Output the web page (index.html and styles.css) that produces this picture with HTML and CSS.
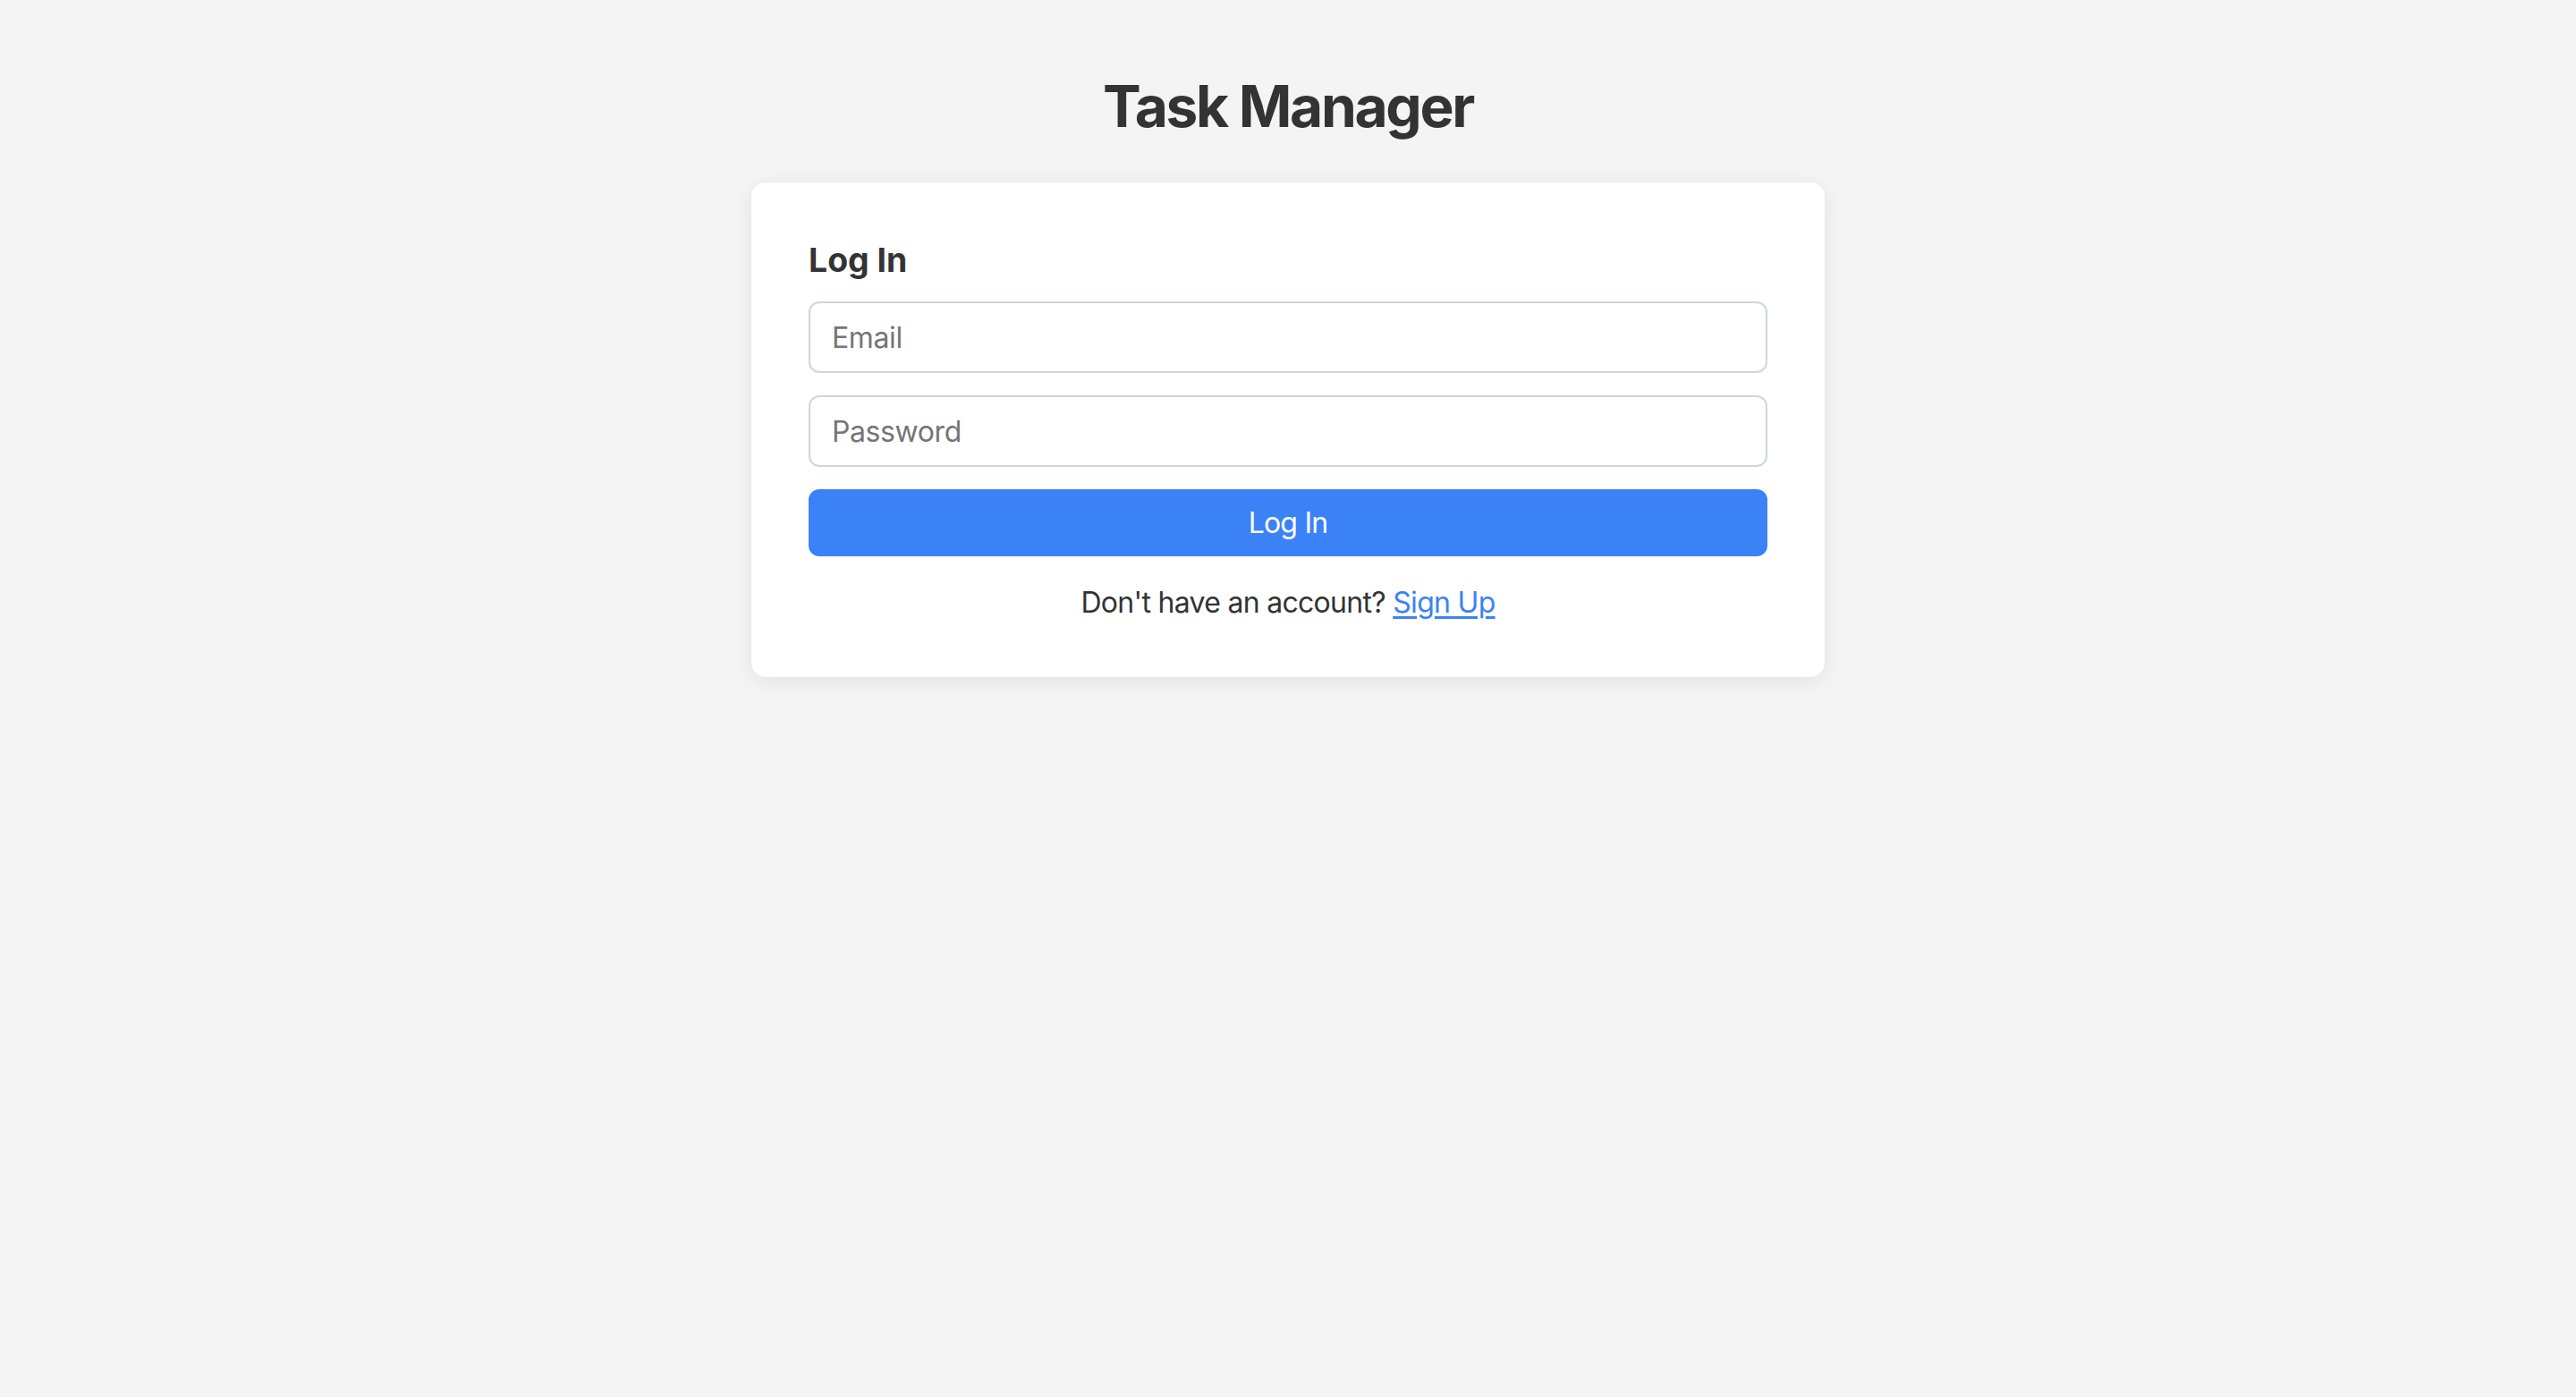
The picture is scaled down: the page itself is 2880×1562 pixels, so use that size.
FILE: index.html
```html
<!DOCTYPE html>
<html lang="en">
<head>
<meta charset="utf-8">
<title>Task Manager</title>
<link rel="stylesheet" href="styles.css">
</head>
<body>
<main class="page">
  <h1 class="title">Task Manager</h1>
  <section class="card">
    <h3 class="card-title">Log In</h3>
    <form class="form">
      <input class="field" type="email" placeholder="Email">
      <input class="field" type="password" placeholder="Password">
      <button class="btn" type="button">Log In</button>
    </form>
    <p class="switch">Don't have an account? <a class="link" href="#">Sign Up</a></p>
  </section>
</main>
</body>
</html>
```

FILE: styles.css
```css
html, body {
  margin: 0;
  padding: 0;
  background: #f4f4f4;
}
body {
  font-family: Inter, "Noto Sans", "Liberation Sans", sans-serif;
  color: #333333;
  min-height: 1562px;
}
.page {
  display: flex;
  flex-direction: column;
  align-items: center;
  padding-top: 80px;
}
.title {
  margin: 0;
  font-size: 64px;
  line-height: 78px;
  font-weight: 700;
  color: #333333;
  letter-spacing: -2.3px;
}
.card {
  box-sizing: border-box;
  width: 1200px;
  margin-top: 46px;
  background: #ffffff;
  border-radius: 16px;
  padding: 64px;
  box-shadow: 0 4px 20px rgba(0, 0, 0, 0.08);
}
.card-title {
  margin: 0;
  font-size: 37.4px;
  line-height: 45px;
  font-weight: 700;
  color: #333333;
}
.form {
  display: flex;
  flex-direction: column;
  gap: 25px;
  margin-top: 24px;
}
.field {
  box-sizing: border-box;
  width: 100%;
  height: 80px;
  padding: 0 24px;
  border: 2px solid #d1d5db;
  border-radius: 12px;
  font-family: Inter, "Noto Sans", "Liberation Sans", sans-serif;
  font-size: 32px;
  letter-spacing: -0.4px;
  color: #333333;
  background: #ffffff;
  outline: none;
}
.field::placeholder {
  color: #757575;
}
.btn {
  box-sizing: border-box;
  width: 100%;
  height: 75px;
  border: none;
  border-radius: 12px;
  background: #3b82f6;
  color: #ffffff;
  font-family: Inter, "Noto Sans", "Liberation Sans", sans-serif;
  font-size: 32px;
  letter-spacing: -0.8px;
  cursor: pointer;
}
.switch {
  margin: 32px 0 0;
  text-align: center;
  font-size: 32px;
  line-height: 39px;
  letter-spacing: -0.7px;
  color: #333333;
}
.link {
  color: #3b82f6;
  text-decoration: underline;
  text-underline-offset: 4px;
}
```
